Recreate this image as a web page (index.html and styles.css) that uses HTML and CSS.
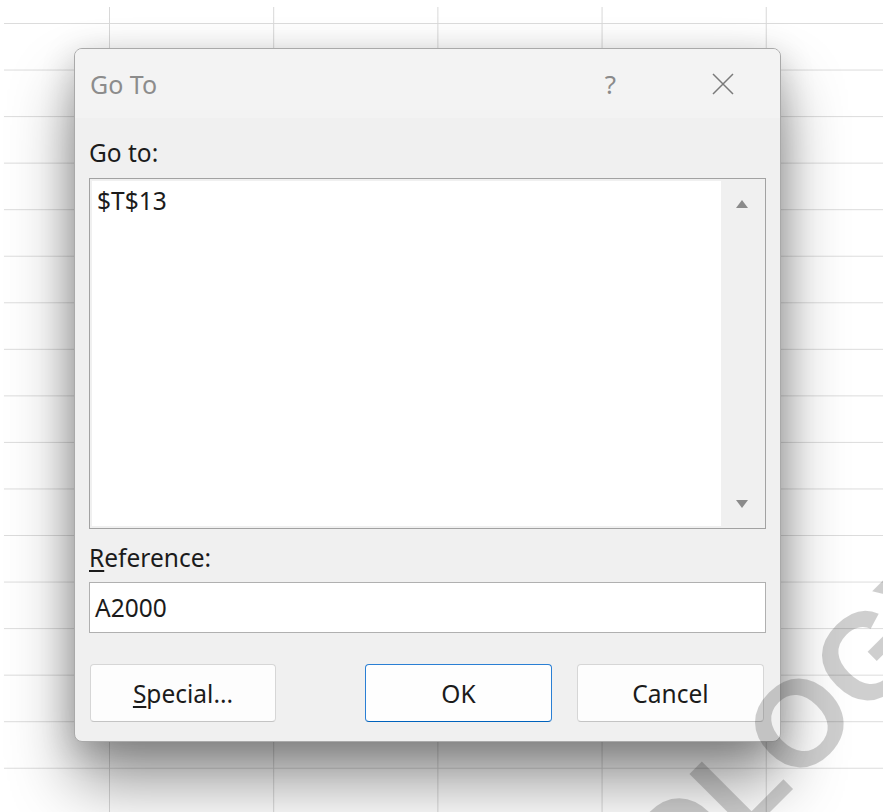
FILE: index.html
```html
<!DOCTYPE html>
<html lang="en">
<head>
<meta charset="utf-8">
<title>Go To</title>
<link rel="stylesheet" href="styles.css">
</head>
<body>
<div class="sheet">
  <div class="dialog" role="dialog" aria-labelledby="dlg-title">
    <div class="titlebar">
      <span class="title" id="dlg-title">Go To</span>
      <span class="help">?</span>
      <svg class="close" viewBox="0 0 22 22" aria-hidden="true">
        <path d="M1 1 L21 21 M21 1 L1 21"/>
      </svg>
    </div>
    <div class="body">
      <div class="label">Go to:</div>
      <div class="listbox">
        <div class="list-items">
          <div class="item">$T$13</div>
        </div>
        <div class="scrollbar">
          <span class="arrow up"></span>
          <span class="arrow down"></span>
        </div>
      </div>
      <div class="label ref-label"><u>R</u>eference:</div>
      <div class="input">A2000</div>
      <div class="buttons">
        <button class="btn special" type="button"><u>S</u>pecial...</button>
        <button class="btn ok" type="button">OK</button>
        <button class="btn" type="button">Cancel</button>
      </div>
    </div>
  </div>
  <svg class="watermark" viewBox="0 0 883 812" aria-hidden="true">
    <text class="mark-text" x="676" y="906" transform="rotate(-45 676 906)">OLOGY</text>
  </svg>
</div>
</body>
</html>
```
FILE: styles.css
```css
html, body {
  margin: 0;
  padding: 0;
}

body {
  width: 883px;
  height: 812px;
  overflow: hidden;
  background: #fff;
  font-family: "Noto Sans", "Open Sans", sans-serif;
  color: #1b1b1b;
}

/* worksheet behind the dialog: cell gridlines */
.sheet {
  position: relative;
  width: 883px;
  height: 812px;
  box-sizing: border-box;
  padding: 7px 0 0 4px;
  background-color: #fff;
  background-image:
    linear-gradient(to right, #d8d8d8 0 1px, transparent 1px),
    linear-gradient(to bottom, #dcdcdc 0 1px, transparent 1px);
  background-size: 164.2px 100%, 100% 46.56px;
  background-position: 105px 0, 0 16px;
  background-origin: content-box;
  background-clip: content-box;
  overflow: hidden;
}

/* dialog window */
.dialog {
  position: absolute;
  left: 74px;
  top: 48px;
  width: 707px;
  height: 694px;
  box-sizing: border-box;
  border: 1px solid #a9a9a9;
  border-radius: 8px;
  background: #f0f0f0;
  box-shadow:
    0 40px 64px rgba(0, 0, 0, 0.42),
    0 8px 34px rgba(0, 0, 0, 0.2);
  overflow: hidden;
  display: flex;
  flex-direction: column;
}

.titlebar {
  flex: none;
  height: 69px;
  display: flex;
  align-items: center;
  padding: 0 46px 0 15px;
  background: #f3f3f3;
}

.title {
  flex: 1;
  font-size: 25px;
  line-height: 34px;
  color: #8c8c8c;
}

.help {
  font-size: 26px;
  line-height: 34px;
  color: #8a8a8a;
  margin-right: 96px;
}

.close {
  width: 22px;
  height: 22px;
  fill: none;
  stroke: #7a7a7a;
  stroke-width: 1.5;
}

.body {
  flex: 1;
  display: flex;
  flex-direction: column;
  padding: 18px 14px 19px 14px;
}

.label {
  height: 34px;
  font-size: 24.5px;
  line-height: 34px;
  color: #1b1b1b;
}

.label u,
.btn u {
  text-underline-offset: 3px;
  text-decoration-thickness: 1.5px;
}

/* list of previous references */
.listbox {
  margin-top: 8px;
  height: 351px;
  box-sizing: border-box;
  border: 1px solid #a2a2a2;
  padding: 2px;
  background: #f0f0f0;
  display: flex;
}

.list-items {
  flex: 1;
  background: #fff;
  padding: 3px 5px 0;
}

.item {
  font-size: 24.5px;
  line-height: 34px;
}

.scrollbar {
  width: 42px;
  display: flex;
  flex-direction: column;
  justify-content: space-between;
  align-items: center;
  padding: 19px 0 18px;
}

.arrow {
  width: 0;
  height: 0;
  border-left: 6px solid transparent;
  border-right: 6px solid transparent;
}

.arrow.up {
  border-bottom: 8px solid #8b8b8b;
}

.arrow.down {
  border-top: 8px solid #8b8b8b;
}

.ref-label {
  margin-top: 11.5px;
}

.input {
  margin-top: 7.5px;
  height: 51px;
  box-sizing: border-box;
  border: 1px solid #b0b0b0;
  background: #fff;
  padding: 0 5px;
  font-size: 24.5px;
  line-height: 49px;
}

.buttons {
  margin-top: 31px;
  display: flex;
  padding: 0 2px 0 1px;
}

.btn {
  width: 187px;
  height: 58px;
  box-sizing: border-box;
  border: 1px solid #d6d6d6;
  border-bottom-color: #c4c4c4;
  border-radius: 4px;
  background: #fdfdfd;
  font-family: "Noto Sans", "Open Sans", sans-serif;
  font-size: 24.5px;
  color: #1b1b1b;
  padding: 0;
}

.special {
  width: 186px;
  margin-right: auto;
}

.ok {
  margin-right: 25px;
  border-color: #2a7fd4;
  border-bottom-color: #0062bc;
  background: #fefefe;
}

/* faint brand mark over the page */
.watermark {
  position: absolute;
  left: 0;
  top: 0;
  width: 883px;
  height: 812px;
  pointer-events: none;
}

.mark-text {
  font-family: "Liberation Sans", Arial, sans-serif;
  font-weight: 700;
  font-size: 122px;
  fill: rgba(0, 0, 0, 0.19);
}
```
